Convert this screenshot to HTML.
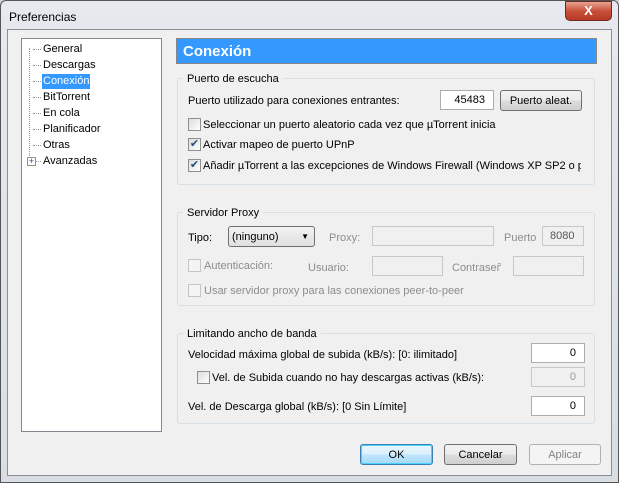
<!DOCTYPE html>
<html><head><meta charset="utf-8"><style>
*{margin:0;padding:0;box-sizing:border-box}
body{width:619px;height:483px;overflow:hidden;background:#cfd6de;font-family:"Liberation Sans",sans-serif;font-size:11px;color:#000;position:relative}
.a{position:absolute;white-space:nowrap;margin-top:2px}
.frame,.client,.close,.tree,.hdr,.grp,.in,.dis,.btn,.cb,.cbd{margin-top:0}
.frame{left:0;top:0;width:619px;height:483px;border:1px solid #555;border-radius:6px 6px 0 0;background:linear-gradient(#e6e9ee,#d9dee5)}
.client{left:7px;top:29px;width:605px;height:447px;background:#f0f0f0;border:1px solid #8a8f96}
.close{left:565px;top:1px;width:47px;height:20px;border:1px solid #6d2a22;border-radius:0 0 5px 5px;background:linear-gradient(#e8a493,#c7503a 50%,#b83a23);color:#fff;font-weight:bold;font-size:13px;text-align:center;line-height:18px}
.tree{left:21px;top:38px;width:141px;height:394px;background:#fff;border:1px solid #828790}
.ti{position:absolute;left:42px;height:15px;line-height:15px;padding:0 1px;margin-top:2px}
.dot{position:absolute;left:33px;width:8px;border-top:1px dotted #999;margin-top:2px}
.hdr{left:176px;top:38px;width:421px;height:26px;background:#3399ff;border:1px solid #888;color:#fff;font-weight:bold;font-size:15px;line-height:26px;padding-left:6px}
.grp{border:1px solid #d5dfe5;border-radius:3px}
.gl{background:#f0f0f0;padding:0 4px}
.in{background:#fff;border:1px solid #abadb3;height:20px;text-align:right;padding-right:8px;line-height:19px}
.dis{background:#f0f0f0;border:1px solid #c8c8c8;height:20px;color:#999;text-align:right;padding-right:8px;line-height:19px}
.btn{border:1px solid #707070;border-radius:3px;background:linear-gradient(#f2f2f2,#ebebeb 50%,#dddddd 51%,#cfcfcf);text-align:center;height:21px;line-height:20px}
.cb{width:13px;height:13px;border:1px solid #8e8f8f;background:linear-gradient(135deg,#dcdcdc,#fff);font-size:11px;line-height:11px;text-align:center;color:#2a4c7d}
.cbd{width:13px;height:13px;border:1px solid #c5c5c5;background:#f4f4f4}
.g{color:#8d8d8d}
</style></head><body>
<div class="a frame"></div>
<div class="a" style="left:9px;top:8px;font-size:12px">Preferencias</div>
<div class="a close">X</div>
<div class="a client"></div>

<div class="a tree"></div>
<div class="a" style="left:29px;top:46px;height:110px;border-left:1px dotted #999"></div>
<div class="a dot" style="top:47px"></div><div class="a ti" style="top:40px">General</div>
<div class="a dot" style="top:63px"></div><div class="a ti" style="top:56px">Descargas</div>
<div class="a dot" style="top:79px"></div><div class="a ti" style="top:72px;background:#3399ff;color:#fff">Conexión</div>
<div class="a dot" style="top:95px"></div><div class="a ti" style="top:88px">BitTorrent</div>
<div class="a dot" style="top:111px"></div><div class="a ti" style="top:104px">En cola</div>
<div class="a dot" style="top:127px"></div><div class="a ti" style="top:120px">Planificador</div>
<div class="a dot" style="top:143px"></div><div class="a ti" style="top:136px">Otras</div>
<div class="a dot" style="top:159px;left:35px;width:6px"></div><div class="a ti" style="top:152px">Avanzadas</div>
<div class="a" style="left:27px;top:155px;width:9px;height:9px;border:1px solid #919191;background:#fff;font-size:9px;line-height:7px;text-align:center;color:#1c4dad">+</div>

<div class="a hdr">Conexión</div>

<div class="a grp" style="left:177px;top:78px;width:418px;height:107px"></div>
<div class="a gl" style="left:183px;top:71px">Puerto de escucha</div>
<div class="a" style="left:188px;top:93px">Puerto utilizado para conexiones entrantes:</div>
<div class="a in" style="left:440px;top:90px;width:54px">45483</div>
<div class="a btn" style="left:500px;top:90px;width:82px">Puerto aleat.</div>
<div class="a cb" style="left:188px;top:118px"></div><div class="a" style="left:203px;top:117px">Seleccionar un puerto aleatorio cada vez que µTorrent inicia</div>
<div class="a cb" style="left:188px;top:138px">✔</div><div class="a" style="left:203px;top:137px">Activar mapeo de puerto UPnP</div>
<div class="a cb" style="left:188px;top:159px">✔</div><div class="a" style="left:203px;top:158px;width:378px;overflow:hidden">Añadir µTorrent a las excepciones de Windows Firewall (Windows XP SP2 o posterior)</div>

<div class="a grp" style="left:177px;top:212px;width:418px;height:94px"></div>
<div class="a gl" style="left:183px;top:205px">Servidor Proxy</div>
<div class="a" style="left:188px;top:230px">Tipo:</div>
<div class="a btn" style="left:228px;top:226px;width:87px;text-align:left;padding-left:3px;background:linear-gradient(#f2f2f2,#e0e0e0)">(ninguno)<span style="position:absolute;right:5px;font-size:8px">▼</span></div>
<div class="a g" style="left:329px;top:230px">Proxy:</div>
<div class="a dis" style="left:372px;top:226px;width:122px"></div>
<div class="a g" style="left:504px;top:230px;width:33px;overflow:hidden">Puerto</div>
<div class="a dis" style="left:542px;top:226px;width:42px;color:#555;text-align:left;padding-left:7px">8080</div>
<div class="a cbd" style="left:188px;top:259px"></div><div class="a g" style="left:204px;top:258px">Autenticación:</div>
<div class="a g" style="left:308px;top:260px">Usuario:</div>
<div class="a dis" style="left:372px;top:256px;width:71px"></div>
<div class="a g" style="left:452px;top:260px;width:49px;overflow:hidden">Contraseña:</div>
<div class="a dis" style="left:513px;top:256px;width:71px"></div>
<div class="a cbd" style="left:188px;top:284px"></div><div class="a g" style="left:204px;top:283px">Usar servidor proxy para las conexiones peer-to-peer</div>

<div class="a grp" style="left:177px;top:333px;width:418px;height:91px"></div>
<div class="a gl" style="left:183px;top:326px">Limitando ancho de banda</div>
<div class="a" style="left:188px;top:347px">Velocidad máxima global de subida (kB/s): [0: ilimitado]</div>
<div class="a in" style="left:531px;top:343px;width:54px">0</div>
<div class="a cb" style="left:197px;top:371px"></div><div class="a" style="left:212px;top:370px">Vel. de Subida cuando no hay descargas activas (kB/s):</div>
<div class="a dis" style="left:531px;top:367px;width:54px">0</div>
<div class="a" style="left:188px;top:399px">Vel. de Descarga global (kB/s): [0 Sin Límite]</div>
<div class="a in" style="left:531px;top:396px;width:54px">0</div>

<div class="a btn" style="left:360px;top:444px;width:73px;border-color:#3c7fb1;background:linear-gradient(#eaf6fd,#d9f0fc 50%,#bee6fd 51%,#a7d9f5);box-shadow:inset 0 0 0 1px #48d2fd">OK</div>
<div class="a btn" style="left:444px;top:444px;width:73px">Cancelar</div>
<div class="a btn" style="left:529px;top:444px;width:72px;border-color:#adb2b5;background:#f4f4f4;color:#838383">Aplicar</div>
</body></html>
